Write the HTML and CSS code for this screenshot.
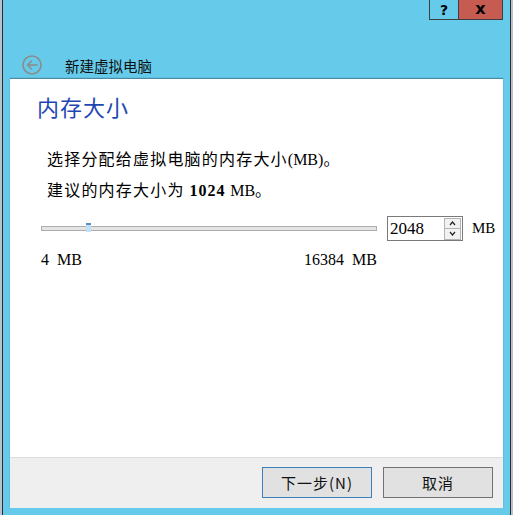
FILE: index.html
```html
<!DOCTYPE html>
<html lang="zh-CN">
<head>
<meta charset="utf-8">
<title>新建虚拟电脑</title>
<link rel="stylesheet" href="styles.css">
</head>
<body>
<div class="window">
  <div class="titlebar">
    <div class="tb-btn help">?</div>
    <div class="tb-btn close">x</div>
  </div>
  <div class="nav">
    <svg class="back" width="20" height="20" viewBox="0 0 20 20">
      <circle cx="10" cy="10" r="9" fill="none" stroke="#8c8c8c" stroke-width="1.6"/>
      <path d="M15 10 H5.5 M9.5 6 L5.5 10 L9.5 14" fill="none" stroke="#8c8c8c" stroke-width="1.6" stroke-linecap="round" stroke-linejoin="round"/>
    </svg>
    <span class="nav-title">新建虚拟电脑</span>
  </div>
  <div class="panel">
    <div class="main">
      <h1 class="heading">内存大小</h1>
      <p class="line first">选择分配给虚拟电脑的内存大小<span class="lat">(MB)</span>。</p>
      <p class="line">建议的内存大小为 <b class="lat bold">1024</b> <span class="lat">MB</span>。</p>
      <div class="slider-row">
        <div class="slider">
          <div class="track"></div>
          <div class="thumb"></div>
        </div>
        <div class="spin">
          <span class="spin-val lat">2048</span>
          <div class="spin-btns">
            <div class="spin-btn"><svg width="7" height="5" viewBox="0 0 7 5"><path d="M1 4 L3.5 1 L6 4" fill="none" stroke="#222" stroke-width="1.2"/></svg></div>
            <div class="spin-btn"><svg width="7" height="5" viewBox="0 0 7 5"><path d="M1 1 L3.5 4 L6 1" fill="none" stroke="#222" stroke-width="1.2"/></svg></div>
          </div>
        </div>
        <span class="unit lat">MB</span>
      </div>
      <div class="labels">
        <span class="lat">4 &nbsp;MB</span>
        <span class="lat">16384 &nbsp;MB</span>
      </div>
    </div>
    <div class="footer">
      <button class="btn primary">下一步(N)</button>
      <button class="btn">取消</button>
    </div>
  </div>
</div>
</body>
</html>
```
FILE: styles.css
```css
html, body {
  margin: 0;
  padding: 0;
}
body {
  width: 513px;
  height: 515px;
  overflow: hidden;
  background: #b7c2cc;
  font-family: "Noto Sans CJK SC", sans-serif;
  color: #000;
}
.window {
  margin-left: 2px;
  width: 507px;
  height: 515px;
  background: #66cbea;
  border-left: 1px solid #2e2e2e;
  border-right: 1px solid #2e2e2e;
  display: flex;
  flex-direction: column;
}
.titlebar {
  height: 20px;
  display: flex;
  justify-content: flex-end;
  padding-right: 7px;
}
.tb-btn {
  height: 20px;
  box-sizing: border-box;
  border: 1px solid #3e3e3e;
  border-top: none;
  display: flex;
  align-items: center;
  justify-content: center;
  font-family: "DejaVu Sans", sans-serif;
  font-weight: bold;
  font-size: 14px;
  color: #000;
}
.tb-btn.help {
  width: 29px;
  border-right: none;
}
.tb-btn.close {
  width: 45px;
  background: #c55b51;
  font-size: 16px;
  padding-bottom: 2px;
}
.nav {
  height: 20px;
  margin-top: 35px;
  margin-bottom: 4px;
  padding-left: 19px;
  display: flex;
  align-items: center;
}
.back {
  display: block;
}
.nav-title {
  margin-left: 23px;
  font-size: 14.5px;
  line-height: 20px;
  color: #111;
  padding-top: 2px;
}
.panel {
  margin: 0 7px 7px 7px;
  flex: 1;
  display: flex;
  flex-direction: column;
  box-shadow: 0 -1px 1px rgba(40, 60, 80, 0.45);
}
.main {
  flex: 1;
  background: #fff;
  padding: 12px 0 0 27px;
}
.heading {
  margin: 0;
  font-size: 22px;
  line-height: 30px;
  font-weight: normal;
  letter-spacing: 1px;
  color: #1f47b3;
}
.line {
  margin: 7px 0 0 10px;
  font-size: 16px;
  line-height: 24px;
  height: 24px;
  letter-spacing: 1.2px;
  color: #000;
}
.line.first {
  margin-top: 25px;
}
.lat {
  font-family: "Liberation Serif", serif;
  font-size: 16px;
  letter-spacing: 0;
}
.bold {
  font-weight: bold;
  letter-spacing: 1px;
}
.slider-row {
  margin: 15px 0 0 4px;
  height: 25px;
  display: flex;
  align-items: center;
}
.slider {
  position: relative;
  width: 336px;
  height: 25px;
  display: flex;
  align-items: center;
}
.track {
  width: 100%;
  height: 5px;
  box-sizing: border-box;
  border: 1px solid #aeaeae;
  background: #e4e4e4;
}
.thumb {
  position: absolute;
  left: 45px;
  top: 7px;
  width: 5px;
  height: 9px;
  box-sizing: border-box;
  background: #bfe1f9;
  border-top: 2px solid #5b8fbf;
}
.spin {
  margin-left: 10px;
  width: 76px;
  height: 25px;
  box-sizing: border-box;
  border: 1px solid #7a7a7a;
  background: #fff;
  display: flex;
  align-items: center;
  justify-content: space-between;
}
.spin-val {
  padding-left: 2px;
  font-size: 17px;
  color: #000;
}
.spin-btns {
  width: 17px;
  height: 22px;
  margin-right: 1px;
  display: flex;
  flex-direction: column;
}
.spin-btn {
  flex: 1;
  box-sizing: border-box;
  border: 1px solid #b3b3b3;
  background: #f2f2f2;
  display: flex;
  align-items: center;
  justify-content: center;
}
.spin-btn + .spin-btn {
  border-top: none;
}
.unit {
  margin-left: 9px;
  font-size: 15px;
}
.labels {
  margin: 9px 0 0 4px;
  width: 336px;
  height: 20px;
  display: flex;
  justify-content: space-between;
  align-items: center;
}
.footer {
  height: 50px;
  border-top: 1px solid #dcdcdc;
  background: #efefef;
  display: flex;
  justify-content: flex-end;
  align-items: flex-start;
  padding-right: 10px;
  gap: 11px;
}
.btn {
  margin-top: 9px;
  width: 110px;
  height: 31px;
  box-sizing: border-box;
  border: 1px solid #717171;
  background: #e1e1e1;
  font-family: "Noto Sans CJK SC", sans-serif;
  font-size: 15px;
  color: #111;
  padding: 0;
  letter-spacing: 1px;
}
.btn.primary {
  border-color: #3d7fb8;
}
```
